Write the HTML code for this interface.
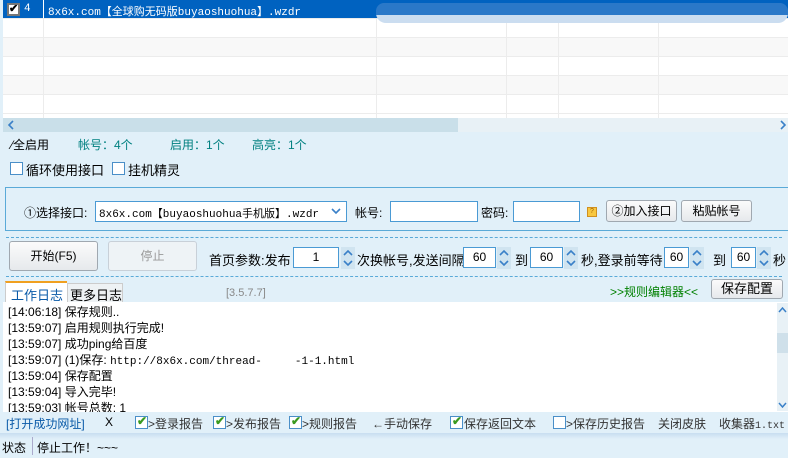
<!DOCTYPE html><html><head><meta charset="utf-8"><style>
*{margin:0;padding:0;box-sizing:border-box}
body{width:788px;height:458px;overflow:hidden;background:#e1f0f9;font-family:"Liberation Sans","Noto Sans CJK SC",sans-serif;font-size:12px;color:#000;position:relative}
.a{position:absolute;white-space:nowrap}
.m{font-family:"Liberation Mono","Noto Sans CJK SC",monospace;font-size:11px}
.btn{position:absolute;border:1px solid #a0a8b0;border-radius:3px;background:linear-gradient(#fbfbfb,#e6e9ec);text-align:center;font-size:12px}
.inp{position:absolute;background:#fff;border:1px solid #4a9ad4}
.cb{position:absolute;width:13px;height:13px;border:1px solid #4a8fc8;background:#fff}
.ck{position:absolute;left:1px;top:-3px;color:#3a9a20;font-size:12px;font-weight:bold}
.spin{position:absolute;width:14px;height:22px;background:#d0e4f0}
.dash{position:absolute;left:6px;right:6px;border-top:1px dashed #5aaad8}
.log div{height:16px;line-height:16px}
</style></head><body>
<svg width="0" height="0" style="position:absolute"><defs><g id="sp"><path d="M3 8 L7 4 L11 8" stroke="#3a80c8" stroke-width="1.6" fill="none"/><path d="M3 14 L7 18 L11 14" stroke="#3a80c8" stroke-width="1.6" fill="none"/></g></defs></svg>
<!-- table -->
<div class="a" style="left:3px;top:0;width:785px;height:118px;background:#fff"></div>
<div class="a" style="left:3px;top:37px;width:785px;height:19px;background:#f8f8f8"></div>
<div class="a" style="left:3px;top:75px;width:785px;height:19px;background:#f8f8f8"></div>
<div class="a" style="left:3px;top:18px;width:785px;border-top:1px solid #ececec"></div>
<div class="a" style="left:3px;top:37px;width:785px;border-top:1px solid #ececec"></div>
<div class="a" style="left:3px;top:56px;width:785px;border-top:1px solid #ececec"></div>
<div class="a" style="left:3px;top:75px;width:785px;border-top:1px solid #ececec"></div>
<div class="a" style="left:3px;top:94px;width:785px;border-top:1px solid #ececec"></div>
<div class="a" style="left:3px;top:113px;width:785px;border-top:1px solid #ececec"></div>
<div class="a" style="left:43px;top:0;height:118px;border-left:1px solid #ececec"></div>
<div class="a" style="left:376px;top:0;height:118px;border-left:1px solid #ececec"></div>
<div class="a" style="left:506px;top:0;height:118px;border-left:1px solid #ececec"></div>
<div class="a" style="left:558px;top:0;height:118px;border-left:1px solid #ececec"></div>
<div class="a" style="left:658px;top:0;height:118px;border-left:1px solid #ececec"></div>
<div class="a" style="left:3px;top:0;width:785px;height:18px;background:#0062c0"></div>
<div class="a" style="left:376px;top:3px;width:412px;height:20px;background:#cbddf0;border-radius:10px"></div>
<div class="a" style="left:376px;top:3px;width:412px;height:12px;background:#2a78c8;border-radius:8px 8px 0 0"></div>
<div class="a" style="left:43px;top:0;height:18px;border-left:1px solid #fff"></div>
<div class="a" style="left:7px;top:3px;width:13px;height:13px;background:#fff;border:2px solid #777;color:#000;font-size:11px;line-height:9px;font-weight:bold;text-align:center">✔</div>
<div class="a m" style="left:24px;top:3px;color:#fff">4</div>
<div class="a m" style="left:48px;top:3px;color:#fff">8x6x.com【全球购无码版buyaoshuohua】.wzdr</div>
<!-- hscroll -->
<div class="a" style="left:3px;top:118px;width:785px;height:14px;background:#e8f1f6"></div>
<div class="a" style="left:3px;top:118px;width:455px;height:14px;background:#c9dfe9"></div>
<svg class="a" style="left:6px;top:119px" width="10" height="12"><path d="M7 2 L3 6 L7 10" stroke="#3a80c8" stroke-width="1.6" fill="none"/></svg>
<svg class="a" style="left:778px;top:119px" width="10" height="12"><path d="M3 2 L7 6 L3 10" stroke="#3a80c8" stroke-width="1.6" fill="none"/></svg>
<!-- stats -->
<div class="a" style="left:11px;top:136px">⁄全启用</div>
<div class="a" style="left:78px;top:136px;color:#008080">帐号：4个</div>
<div class="a" style="left:170px;top:136px;color:#008080">启用：1个</div>
<div class="a" style="left:252px;top:136px;color:#008080">高亮：1个</div>
<div class="cb" style="left:10px;top:162px"></div><div class="a" style="left:26px;top:160px;font-size:13px">循环使用接口</div>
<div class="cb" style="left:112px;top:162px"></div><div class="a" style="left:128px;top:160px;font-size:13px">挂机精灵</div>
<!-- group -->
<div class="a" style="left:5px;top:187px;width:783px;height:44px;border:1px solid #5aaad8;border-right:none"></div>
<div class="a" style="left:24px;top:204px">①选择接口:</div>
<div class="inp" style="left:95px;top:201px;width:252px;height:21px"></div>
<div class="a m" style="left:99px;top:205px">8x6x.com【buyaoshuohua手机版】.wzdr</div>
<svg class="a" style="left:330px;top:206px" width="12" height="10"><path d="M2 3 L6 7 L10 3" stroke="#3a80c8" stroke-width="1.6" fill="none"/></svg>
<div class="a" style="left:355px;top:204px">帐号:</div>
<div class="inp" style="left:390px;top:201px;width:88px;height:21px"></div>
<div class="a" style="left:481px;top:204px">密码:</div>
<div class="inp" style="left:513px;top:201px;width:67px;height:21px"></div>
<div class="a" style="left:587px;top:207px;width:10px;height:10px;background:#f8c840;border:1px solid #d09020;font-size:7px;line-height:8px;text-align:center;color:#a06000">?</div>
<div class="btn" style="left:606px;top:200px;width:71px;height:22px;line-height:20px">②加入接口</div>
<div class="btn" style="left:681px;top:200px;width:71px;height:22px;line-height:20px">粘贴帐号</div>
<!-- buttons row -->
<div class="dash" style="top:237px"></div>
<div class="btn" style="left:9px;top:241px;width:89px;height:30px;line-height:28px">开始(F5)</div>
<div class="btn" style="left:108px;top:241px;width:89px;height:30px;line-height:28px;color:#999;background:#eef3f6;border-color:#c8d0d8">停止</div>
<div class="a" style="left:209px;top:250px;font-size:13px">首页参数:发布</div>
<div class="inp" style="left:293px;top:247px;width:46px;height:21px;text-align:center;line-height:19px">1</div>
<svg class="spin" style="left:341px;top:247px"><use href="#sp"/></svg>
<div class="a" style="left:357px;top:250px;font-size:13px">次换帐号,发送间隔</div>
<div class="inp" style="left:463px;top:247px;width:33px;height:21px;text-align:center;line-height:19px">60</div>
<svg class="spin" style="left:497px;top:247px"><use href="#sp"/></svg>
<div class="a" style="left:515px;top:250px;font-size:13px">到</div>
<div class="inp" style="left:530px;top:247px;width:33px;height:21px;text-align:center;line-height:19px">60</div>
<svg class="spin" style="left:564px;top:247px"><use href="#sp"/></svg>
<div class="a" style="left:581px;top:250px;font-size:13px">秒,登录前等待</div>
<div class="inp" style="left:664px;top:247px;width:25px;height:21px;text-align:center;line-height:19px">60</div>
<svg class="spin" style="left:690px;top:247px"><use href="#sp"/></svg>
<div class="a" style="left:713px;top:250px;font-size:13px">到</div>
<div class="inp" style="left:731px;top:247px;width:25px;height:21px;text-align:center;line-height:19px">60</div>
<svg class="spin" style="left:757px;top:247px"><use href="#sp"/></svg>
<div class="a" style="left:773px;top:250px;font-size:13px">秒</div>
<div class="dash" style="top:276px"></div>
<!-- tabs -->
<div class="a" style="left:5px;top:281px;width:62px;height:22px;background:#fff;border-top:2px solid #f0a020;border-left:1px solid #ccc"></div>
<div class="a" style="left:11px;top:285px;color:#0a5aa8;font-size:13px">工作日志</div>
<div class="a" style="left:67px;top:283px;width:56px;height:20px;background:#eef2f4;border:1px solid #ccc;border-bottom:none"></div>
<div class="a" style="left:70px;top:285px;font-size:13px">更多日志</div>
<div class="a" style="left:226px;top:287px;color:#888;font-size:11px">[3.5.7.7]</div>
<div class="a" style="left:610px;top:283px;color:#008000;font-size:12px">&gt;&gt;规则编辑器&lt;&lt;</div>
<div class="btn" style="left:711px;top:279px;width:72px;height:20px;line-height:18px;font-size:13px">保存配置</div>
<!-- log -->
<div class="a" style="left:3px;top:302px;width:785px;height:110px;background:#fff"></div>
<div class="a" style="left:777px;top:303px;width:11px;height:108px;background:#e8f1f6"></div>
<div class="a" style="left:777px;top:333px;width:11px;height:20px;background:#cfe0ea"></div>
<svg class="a" style="left:777px;top:306px" width="11" height="8"><path d="M2 6 L5.5 2 L9 6" stroke="#3a80c8" stroke-width="1.5" fill="none"/></svg>
<svg class="a" style="left:777px;top:401px" width="11" height="8"><path d="M2 2 L5.5 6 L9 2" stroke="#3a80c8" stroke-width="1.5" fill="none"/></svg>
<div class="a log" style="left:8px;top:304px;font-size:12px">
<div>[14:06:18] 保存规则..</div><div>[13:59:07] 启用规则执行完成!</div><div>[13:59:07] 成功ping给百度</div><div>[13:59:07] (1)保存: <span class="m">http://8x6x.com/thread-&nbsp;&nbsp;&nbsp;&nbsp;&nbsp;-1-1.html</span></div><div>[13:59:04] 保存配置</div><div>[13:59:04] 导入完毕!</div><div>[13:59:03] 帐号总数: 1</div></div>
<!-- bottom options -->
<div class="a" style="left:0;top:412px;width:788px;height:21px;background:#e1f0f9"></div>
<div class="a" style="left:6px;top:415px;color:#0a5aa8">[打开成功网址]</div>
<div class="a" style="left:105px;top:415px">X</div>
<div class="cb" style="left:135px;top:416px"><span class="ck">✔</span></div><div class="a" style="left:148px;top:415px;color:#333">&gt;登录报告</div>
<div class="cb" style="left:213px;top:416px"><span class="ck">✔</span></div><div class="a" style="left:226px;top:415px;color:#333">&gt;发布报告</div>
<div class="cb" style="left:289px;top:416px"><span class="ck">✔</span></div><div class="a" style="left:302px;top:415px;color:#333">&gt;规则报告</div>
<div class="a" style="left:372px;top:415px;color:#333">←手动保存</div>
<div class="cb" style="left:450px;top:416px"><span class="ck">✔</span></div><div class="a" style="left:464px;top:415px;color:#333">保存返回文本</div>
<div class="cb" style="left:553px;top:416px"></div><div class="a" style="left:566px;top:415px;color:#333">&gt;保存历史报告</div>
<div class="a" style="left:658px;top:415px;color:#333">关闭皮肤</div>
<div class="a" style="left:719px;top:415px;color:#333">收集器<span class="m" style="font-size:10px">1.txt</span></div>
<!-- status -->
<div class="a" style="left:0;top:433px;width:788px;height:25px;background:linear-gradient(#c8def0,#e1f0f9 6px)"></div>
<div class="a" style="left:2px;top:439px">状态</div>
<div class="a" style="left:32px;top:437px;height:18px;border-left:1px solid #aac"></div>
<div class="a" style="left:37px;top:439px">停止工作！~~~</div>
</body></html>
